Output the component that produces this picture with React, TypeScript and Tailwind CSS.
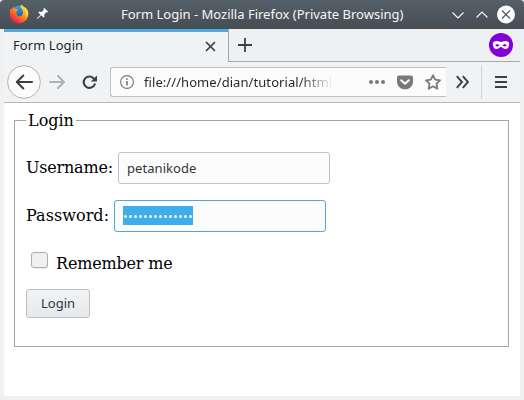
import React from 'react';

function FirefoxLogo() {
  return (
    <svg width="20" height="20" viewBox="0 0 20 20">
      <defs>
        <linearGradient id="fox" x1="0.85" y1="0.1" x2="0.25" y2="0.9">
          <stop offset="0" stopColor="#ffe34a" />
          <stop offset="0.35" stopColor="#ffb01f" />
          <stop offset="0.65" stopColor="#ff6a1f" />
          <stop offset="1" stopColor="#ee1f55" />
        </linearGradient>
        <linearGradient id="globe" x1="0.3" y1="0" x2="0.6" y2="1">
          <stop offset="0" stopColor="#35a4e0" />
          <stop offset="1" stopColor="#1d4fa3" />
        </linearGradient>
      </defs>
      <circle cx="10.3" cy="8.6" r="7.2" fill="url(#globe)" />
      <path
        d="M1.8 4.2 L3 5.3 C3.6 4.4 4 3.2 4.6 2.6 C4.8 4 5.5 4.9 6.8 5 L9 5.3 C9 6.4 7.5 7 7.3 7.7 C7.3 9 7 10.1 8.4 11.4 C10.5 13.2 13.6 12 14 9 C14.2 6.4 12.9 4.6 11.6 3.4 C11.2 2 12 .9 12.7 .4 C13.2 2.1 17 3.2 18.6 6.2 C20.2 9.4 19.2 14 16.6 16.6 C13.5 19.8 8 20.3 4.2 17.2 C.4 14 0 8.5 1.8 4.2 Z"
        fill="url(#fox)"
      />
      <path d="M16 3.4 C18.6 6 19.4 9.5 18 13 C17.3 10.5 17.8 6.8 16 3.4Z" fill="#ffe94f" />
    </svg>
  );
}

function TitleBar() {
  return (
    <div className="flex h-[29px] shrink-0 items-center rounded-t-[4px] bg-gradient-to-b from-[#566069] to-[#454d54] pl-[9px] pr-[9px] font-['Noto_Sans','Open_Sans',sans-serif]">
      <div className="-mt-[2px] flex w-[112px] shrink-0 items-center gap-[7px]">
        <FirefoxLogo />
        <svg width="13" height="13" viewBox="0 0 13 13" className="shrink-0" fill="#fcfcfc">
          <path d="M8.1 .7 L12.2 4.8 L11.1 5.5 L10.2 5.2 L8.2 7.4 L8.5 9.7 L7.5 10.6 L5.2 8.3 L1.4 11.9 L.9 11.3 L4.6 7.7 L2.3 5.4 L3.2 4.5 L5.6 4.9 L7.8 2.8 L7.4 1.7 Z" />
        </svg>
      </div>
      <div className="-mt-px whitespace-nowrap text-[13px] leading-[20px] text-[#f5f6f6]">
        Form Login - Mozilla Firefox (Private Browsing)
      </div>
      <svg className="ml-auto" width="66" height="20" viewBox="0 0 66 20" fill="none" stroke="#fcfcfc" strokeWidth="1.1">
        <path d="M3.5 7.5 L9 13 L14.5 7.5" />
        <path d="M27.5 12.5 L33 7 L38.5 12.5" />
        <circle cx="57" cy="9.5" r="9" fill="#fff" stroke="none" />
        <path d="M53 5.5 L61 13.5 M61 5.5 L53 13.5" stroke="#4b535a" strokeWidth="1.2" />
      </svg>
    </div>
  );
}

function TabStrip() {
  return (
    <div className="flex h-[33px] shrink-0">
      <div className="flex w-[224px] items-center justify-between border-t-[3px] border-[#51a9dc] bg-[#f1f2f4] pb-[2px] pl-[9px] pr-[12px] font-['Noto_Sans',sans-serif] text-[13px] text-[#232629]">
        <span className="tracking-[0.06px]">Form Login</span>
        <svg width="11" height="11" viewBox="0 0 11 11" stroke="#3b4044" strokeWidth="1.7">
          <path d="M1 1 L10 10 M10 1 L1 10" />
        </svg>
      </div>
      <div className="flex flex-1 items-center justify-between border-b border-l border-[#a5a6a9] bg-[#eff0f2] pl-[9px] pr-[7px]">
        <svg width="14" height="14" viewBox="0 0 14 14" stroke="#3b4044" strokeWidth="1.8">
          <path d="M7 0 V14 M0 7 H14" />
        </svg>
        <svg width="24" height="24" viewBox="0 0 24 24">
          <circle cx="12" cy="12" r="12" fill="#8000d7" />
          <path
            fillRule="evenodd"
            d="M3.8 10.7 C3.8 8.1 7.6 7.3 10.2 8.6 Q12 9.4 13.8 8.6 C16.4 7.3 20.2 8.1 20.2 10.7 C20.1 14.1 18.7 16.1 16.5 16.1 C14.1 16.1 13.5 14 12 14 C10.5 14 9.9 16.1 7.5 16.1 C5.3 16.1 3.9 14.1 3.8 10.7 Z M6.2 12.5 Q8.3 14.4 10.4 12.5 Q8.3 9.4 6.2 12.5 Z M13.6 12.5 Q15.7 14.4 17.8 12.5 Q15.7 9.4 13.6 12.5 Z"
            fill="#fff"
          />
        </svg>
      </div>
    </div>
  );
}

function NavBar() {
  return (
    <div className="flex h-[41px] shrink-0 items-center border-b border-[#b5b6b8] bg-[#f1f2f4] pl-[3px]">
      <svg width="34" height="34" viewBox="0 0 34 34" fill="none">
        <circle cx="17" cy="17" r="16.4" fill="#fcfcfc" stroke="#b1b3b5" />
        <path d="M25 17 H10 M16.3 10.5 L9.8 17 L16.3 23.5" stroke="#3b4044" strokeWidth="2" strokeLinecap="round" strokeLinejoin="round" />
      </svg>
      <svg className="ml-[8px]" width="16" height="16" viewBox="0 0 16 16" fill="none" stroke="#aeb0b2" strokeWidth="2" strokeLinecap="round" strokeLinejoin="round">
        <path d="M1 8 H15 M9 2 L15 8 L9 14" />
      </svg>
      <svg className="ml-[17px]" width="15" height="15" viewBox="0 0 15 15" fill="none">
        <path d="M11.5 3.2 A5.7 5.7 0 1 0 12.7 9.3" stroke="#3b4044" strokeWidth="2.1" strokeLinecap="round" />
        <path d="M15 .4 V6.6 H8.8 Z" fill="#3b4044" />
      </svg>
      <div className="ml-[13px] flex h-[30px] w-[336px] shrink-0 items-center rounded-l-[3px] border border-r-0 border-[#bfc0c2] bg-[#fcfcfc] pl-[9px]">
        <svg width="14" height="14" viewBox="0 0 14 14" fill="none" stroke="#737677">
          <circle cx="7" cy="7" r="6.4" strokeWidth="1.1" />
          <path d="M7 6 V10.6 M7 3.2 V4.8" strokeWidth="1.6" />
        </svg>
        <div className="ml-[10px] w-[190px] overflow-hidden whitespace-nowrap bg-gradient-to-r from-[#232629] from-[82%] to-transparent to-[100%] bg-clip-text font-['Noto_Sans',sans-serif] text-[13px] leading-[20px] tracking-[0.07px] text-transparent">
          file:///home/dian/tutorial/html
        </div>
        <svg className="ml-[35px]" width="16" height="6" viewBox="0 0 16 6" fill="#77797a">
          <circle cx="2" cy="3" r="2" />
          <circle cx="8" cy="3" r="2" />
          <circle cx="14" cy="3" r="2" />
        </svg>
        <svg className="ml-[12px]" width="16" height="15" viewBox="0 0 16 15">
          <path d="M2 .5 H14 Q16 .5 16 2.5 V6.2 C16 10.9 12.6 14.3 8 14.3 C3.4 14.3 0 10.9 0 6.2 V2.5 Q0 .5 2 .5Z" fill="#77797a" />
          <path d="M4.2 5.2 L8 8.8 L11.8 5.2" fill="none" stroke="#fff" strokeWidth="2" strokeLinecap="round" strokeLinejoin="round" />
        </svg>
        <svg className="ml-[12px]" width="16" height="16" viewBox="0 0 16 16" fill="none" stroke="#77797a" strokeWidth="1.8" strokeLinejoin="round">
          <path d="M8 1.2 L10.1 5.6 L15 6.3 L11.5 9.7 L12.3 14.7 L8 12.3 L3.7 14.7 L4.5 9.7 L1 6.3 L5.9 5.6 Z" />
        </svg>
      </div>
      <svg className="ml-[10px]" width="13" height="14" viewBox="0 0 13 14" fill="none" stroke="#3b4044" strokeWidth="1.9">
        <path d="M.8 1.2 L6 7 L.8 12.8 M6.8 1.2 L12 7 L6.8 12.8" />
      </svg>
      <div className="ml-[12px] h-[34px] w-px bg-[#d2d3d5]" />
      <svg className="ml-[13px]" width="12" height="12" viewBox="0 0 12 12" fill="#3b4044">
        <path d="M0 0 H12 V2 H0Z M0 5 H12 V7 H0Z M0 10 H12 V12 H0Z" />
      </svg>
    </div>
  );
}

function LoginForm() {
  return (
    <div className="flex-1 bg-white px-[10px] pt-[7px] font-['DejaVu_Serif',serif] text-[16px] leading-[19px] text-black">
      <fieldset className="mr-[1px] h-[237px] border border-[#a5a5a5] px-[11px]">
        <legend className="h-[20px] px-[2px] pt-px leading-[20px]">Login</legend>
        <div className="mt-[22px] flex h-8 items-center">
          <span className="w-[92px] pb-[2px] tracking-[-0.2px]">Username:</span>
          <div className="flex h-8 w-[212px] items-center rounded-[3px] border border-[#bec0c1] bg-[#fcfcfc] pl-[8px] font-['Noto_Sans',sans-serif] text-[13px] text-[#31363b]">
            <span className="tracking-[0.06px]">petanikode</span>
          </div>
        </div>
        <div className="mt-4 flex h-8 items-center">
          <span className="w-[88px] pb-[2px] tracking-[0.05px]">Password:</span>
          <div className="flex h-8 w-[212px] items-center rounded-[3px] border border-[#55a5d3] bg-[#fcfcfc] pb-px pl-[8px]">
            <div className="flex h-[19px] w-[70px] items-center justify-around bg-[#3daee9]">
              {Array.from({ length: 14 }, (_, i) => (
                <span key={i} className="mt-[2px] size-[3px] rounded-full bg-[#f4fafe]" />
              ))}
            </div>
          </div>
        </div>
        <div className="mt-[20px] flex h-[24px] items-start">
          <span className="ml-[5px] h-[16px] w-[17px] rounded-[3px] border border-[#aaacad] bg-[#eff0f1] shadow-[0_1px_1px_#0001]" />
          <span className="ml-[8px] mt-[2px] tracking-[-0.17px]">Remember me</span>
        </div>
        <div className="mt-[13px] flex h-[29px] w-[64px] items-center justify-center rounded-[3px] border border-[#bcbebf] bg-gradient-to-b from-[#f1f2f3] to-[#e8e9ea] font-['Noto_Sans',sans-serif] text-[13px] text-[#31363b]">
          Login
        </div>
      </fieldset>
    </div>
  );
}

export default function App() {
  return (
    <div className="flex h-[400px] w-[524px] flex-col overflow-hidden bg-[#eff0f1]">
      <TitleBar />
      <div className="flex flex-1 flex-col px-[4px] pb-[4px]">
        <TabStrip />
        <NavBar />
        <LoginForm />
      </div>
    </div>
  );
}
